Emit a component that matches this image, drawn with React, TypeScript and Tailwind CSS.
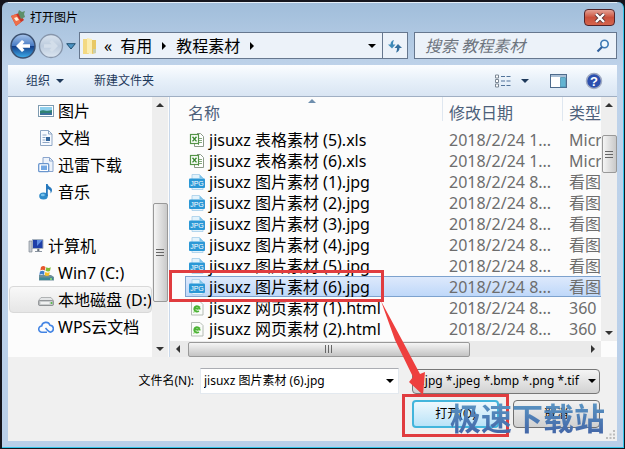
import type { ReactNode } from 'react'

const files = [
  { name: 'jisuxz 表格素材 (5).xls', kind: 'xls', date: '2018/2/24 1...', type: 'Microsoft' },
  { name: 'jisuxz 表格素材 (6).xls', kind: 'xls', date: '2018/2/24 1...', type: 'Microsoft' },
  { name: 'jisuxz 图片素材 (1).jpg', kind: 'jpg', date: '2018/2/24 8...', type: '看图王' },
  { name: 'jisuxz 图片素材 (2).jpg', kind: 'jpg', date: '2018/2/24 8...', type: '看图王' },
  { name: 'jisuxz 图片素材 (3).jpg', kind: 'jpg', date: '2018/2/24 8...', type: '看图王' },
  { name: 'jisuxz 图片素材 (4).jpg', kind: 'jpg', date: '2018/2/24 8...', type: '看图王' },
  { name: 'jisuxz 图片素材 (5).jpg', kind: 'jpg', date: '2018/2/24 8...', type: '看图王' },
  { name: 'jisuxz 图片素材 (6).jpg', kind: 'jpg', date: '2018/2/24 8...', type: '看图王', selected: true },
  { name: 'jisuxz 网页素材 (1).html', kind: 'html', date: '2018/2/24 8...', type: '360' },
  { name: 'jisuxz 网页素材 (2).html', kind: 'html', date: '2018/2/24 8...', type: '360' },
]

function Triangle({ dir, className = '' }: { dir: 'up' | 'down' | 'left' | 'right'; className?: string }) {
  const shapes = { down: 'M0 2h8L4 6z', up: 'M0 6h8L4 2z', right: 'M2 0v8l4-4z', left: 'M6 0v8L2 4z' }
  return (
    <svg viewBox="0 0 8 8" className={`h-2 w-2 shrink-0 fill-current ${className}`} aria-hidden="true">
      <path d={shapes[dir]} />
    </svg>
  )
}

function Icon({ children }: { children: ReactNode }) {
  return (
    <svg viewBox="0 0 16 16" className="h-4 w-4 shrink-0" aria-hidden="true">
      {children}
    </svg>
  )
}

function FileIcon({ kind }: { kind: string }) {
  if (kind === 'xls') {
    return (
      <Icon>
        <path d="M8 1.500h3.500l3 3v10H5.500V12" fill="#fff" stroke="#8b9a88" />
        <path d="M9.500 4v9M10 6.500h3M10 8.500h3M10 10.500h3" fill="none" stroke="#84a87c" />
        <rect x="1.500" y="2.500" width="8" height="9" fill="#fff" stroke="#559448" strokeWidth="1.200" />
        <path d="M3.500 4.800l4 4.600M7.500 4.800l-4 4.600" stroke="#3a8a30" strokeWidth="1.400" />
      </Icon>
    )
  }
  if (kind === 'jpg') {
    return (
      <Icon>
        <path d="M3 0.500h7.500l3.500 3.500v11.500H3z" fill="#e3f3fc" stroke="#a5cde8" strokeWidth=".8" />
        <path d="M10.500 0.500v3.500H14z" fill="#7cc3ea" />
        <rect x="0" y="4.500" width="16" height="9.500" rx="1" fill="#2b98d6" />
        <text x="8" y="12" textAnchor="middle" fontFamily="Liberation Sans" fontSize="7" fill="#fff">JPG</text>
      </Icon>
    )
  }
  return (
    <Icon>
      <path d="M2.500 1.500h8.500l3 3v10.500H2.500z" fill="#fafcfa" stroke="#b4bcb4" />
      <path d="M5.200 8.500h5.400a2.700 2.700 0 1 0-.8 2.300" fill="none" stroke="#4ab234" strokeWidth="1.800" />
      <path d="M4 12c1 .8 5-2 7-6" fill="none" stroke="#6cc44d" strokeWidth=".8" />
    </Icon>
  )
}

const places = [
  {
    label: '图片',
    icon: (
      <Icon>
        <rect x=".5" y="2.500" width="15" height="11" fill="#fff" stroke="#7e9bb0" />
        <path d="M2 4h12v8H2z" fill="#8fd0ee" />
        <path d="M2 8c3-2 6 1 12-1v5H2z" fill="#2f8273" />
        <path d="M2 10.500c4-1 8 0 12-1V12H2z" fill="#3c6f9c" />
      </Icon>
    ),
  },
  {
    label: '文档',
    icon: (
      <Icon>
        <path d="M2.500 .5h8l3.500 3.500v11.500H2.500z" fill="#f7faff" stroke="#8ea6c4" />
        <path d="M10.500 .5V4H14M4.500 5h4M4.500 7.500h3M4.500 10h3M4.500 12.500h7" fill="none" stroke="#8ea6c4" />
        <rect x="8" y="7" width="4" height="4" fill="#34669c" />
      </Icon>
    ),
  },
  {
    label: '迅雷下载',
    icon: (
      <Icon>
        <path d="M5 .5h6.500L15 4v10.500H5z" fill="#edf3fb" stroke="#8aa5cd" />
        <path d="M11.500 .5V4H15" fill="none" stroke="#8aa5cd" />
        <rect x=".7" y="6.700" width="10" height="8" rx="1" fill="#fff" stroke="#6a96ce" strokeWidth="1.300" />
        <rect x="3" y="8.500" width="6" height="4.500" fill="#73a7e2" />
      </Icon>
    ),
  },
  {
    label: '音乐',
    icon: (
      <Icon>
        <ellipse cx="5.500" cy="12" rx="4.300" ry="3.500" fill="#2f8bca" />
        <ellipse cx="4.800" cy="11" rx="2" ry="1.200" fill="#79c4ee" />
        <path d="M8 12V0h1.700c.3 3 4.300 3 4.300 6 0 1.500-.6 2.500-1.500 3.500.5-3-.8-3.500-2.700-4.500V12z" fill="#2678bd" />
      </Icon>
    ),
  },
]

const drives = [
  {
    label: 'Win7 (C:)',
    icon: (
      <Icon>
        <path d="M1 10h12l3 2v3.500H1z" fill="#6f8e99" />
        <path d="M1.500 12.500h13.500V15H1.500z" fill="#3b8796" />
        <path d="M3 2c2-1.500 3-1 4.500 0L6.800 5.500c-2-1-3-.8-4.500 0z" fill="#e5572c" />
        <path d="M8.300 2.300c2 1 3 .8 4.500 0L12 6c-2 .8-3 .6-4.500-.3z" fill="#7dbb38" />
        <path d="M2 6.500c2-1 3-.8 4.500 0L6 10c-2-1-3-.8-4.700 0z" fill="#3d7fcc" />
        <path d="M7.300 7c2 1 3 .8 4.500 0l-.7 3.500c-2 .8-3 .5-4.500-.3z" fill="#f6bf28" />
        <circle cx="13" cy="14" r="1" fill="#9be36b" />
      </Icon>
    ),
  },
  {
    label: '本地磁盘 (D:)',
    selected: true,
    icon: (
      <Icon>
        <path d="M3 5.500h10l2.500 3v4.500H.5V8.500z" fill="#e3e5e6" stroke="#a1a4a6" strokeWidth=".8" />
        <rect x=".8" y="8.500" width="14.400" height="5" rx="1" fill="#c9cccd" stroke="#808486" strokeWidth=".8" />
        <rect x="2.500" y="10" width="9" height="2" fill="#f0f1f1" />
        <circle cx="13.500" cy="11" r=".9" fill="#4fbf3f" />
      </Icon>
    ),
  },
  {
    label: 'WPS云文档',
    icon: (
      <Icon>
        <path
          d="M9 13.200H4a3.100 3.100 0 0 1-.3-6.200A4.300 4.300 0 0 1 12 6.200a3.500 3.500 0 0 1 1 6.800c-1.500.4-2.500-.5-3.500-1.700L7.500 9"
          fill="none"
          stroke="#4485e4"
          strokeWidth="1.600"
        />
      </Icon>
    ),
  },
]

function Place({ label, icon, selected }: { label: string; icon: ReactNode; selected?: boolean }) {
  return (
    <li>
      <a
        href="#"
        className={`ml-px flex h-[27px] items-center gap-1 overflow-hidden pl-7 text-base leading-6 whitespace-nowrap text-black ${
          selected ? 'rounded-sm border border-[#d9d9d9] bg-linear-to-b from-[#f8f8f8] to-[#e6e6e6]' : 'border border-transparent'
        }`}
      >
        {icon}
        <span>{label}</span>
      </a>
    </li>
  )
}

function Grip({ vertical = false }: { vertical?: boolean }) {
  return (
    <span className={`flex gap-0.5 ${vertical ? 'flex-col' : ''}`}>
      {[0, 1, 2].map((i) => (
        <span key={i} className={`bg-[#666] ${vertical ? 'h-px w-2' : 'h-2 w-px'}`} />
      ))}
    </span>
  )
}

export default function App() {
  return (
    <div className="relative w-full bg-[#15151d] pt-0.5 pr-px pb-px pl-0.5 font-['Noto_Sans','Noto_Sans_CJK_SC',sans-serif] text-xs text-black">
      <div className="rounded-t-md border-r border-b border-[#35c5ea] bg-linear-to-b from-[#a0bdda] via-[#bfd3ea] via-15% to-[#b9cfe9] pr-1.5 pb-1.5 pl-1.5">
        {/* Title bar */}
        <header className="flex h-[30px] items-center gap-1 border-t border-[#e4eef8] pr-0.5 pl-0.5">
          <svg viewBox="0 0 16 16" className="h-4 w-4" aria-hidden="true">
            <path d="M1 6l8-3 5 7-8 6z" fill="#c93526" />
            <path d="M1 6l5-2 5 8-5 4z" fill="#ee6f4a" />
            <path d="M8 3l1-3 3 2 3-1-1 3 1 3-4 2z" fill="#5d8f6a" />
            <path d="M4 8l3-1 2 3-3 1z" fill="#fff0d8" />
          </svg>
          <h1 className="text-xs">打开图片</h1>
          <button
            aria-label="关闭"
            className="ml-auto flex h-[17px] w-[31px] items-center justify-center rounded-sm border border-[#52242a] bg-linear-to-b from-[#e3a094] via-[#c9503c] to-[#d5654e]"
          >
            <svg viewBox="0 0 12 10" className="h-2.5 w-3" aria-hidden="true">
              <path d="M2 1l8 8M10 1L2 9" stroke="#5b3436" strokeWidth="4" />
              <path d="M2 1l8 8M10 1L2 9" stroke="#fff" strokeWidth="2.400" />
            </svg>
          </button>
        </header>

        {/* Address bar */}
        <nav className="flex h-[33px] items-start">
          <div className="flex h-7 items-center rounded-full">
            <button aria-label="后退">
              <svg viewBox="0 0 28 28" className="h-7 w-7" aria-hidden="true">
                <defs>
                  <linearGradient id="back" x1="0" y1="0" x2="0" y2="1">
                    <stop offset="0" stopColor="#a9c6ec" />
                    <stop offset=".48" stopColor="#4a7cc4" />
                    <stop offset=".5" stopColor="#123a86" />
                    <stop offset="1" stopColor="#3fb0ee" />
                  </linearGradient>
                </defs>
                <circle cx="15" cy="14" r="12" fill="url(#back)" stroke="#3c506f" strokeWidth="1.500" />
                <path d="M8 14l6-6 2.500 2-2 2.200H22v3.600h-7.500l2 2.200L14 20z" fill="#fff" />
              </svg>
            </button>
            <button aria-label="前进">
              <svg viewBox="0 0 28 28" className="h-7 w-7" aria-hidden="true">
                <defs>
                  <linearGradient id="fwd" x1="0" y1="0" x2="0" y2="1">
                    <stop offset="0" stopColor="#dbe5f0" />
                    <stop offset=".5" stopColor="#bccbdd" />
                    <stop offset="1" stopColor="#dce6f1" />
                  </linearGradient>
                </defs>
                <circle cx="15" cy="14" r="11.500" fill="url(#fwd)" stroke="#8796ab" strokeWidth="1.300" />
                <path d="M22 14l-6-6-2.500 2 2 2.200H8v3.600h7.500l-2 2.200L16 20z" fill="#d3deea" />
              </svg>
            </button>
            <button aria-label="历史记录" className="px-0.5">
              <svg viewBox="0 0 10 7" className="h-[7px] w-2.5" aria-hidden="true">
                <path d="M.7 .7h8.600L5 6z" fill="#4b94c4" stroke="#22506f" />
              </svg>
            </button>
          </div>
          <div className="ml-px flex h-[27px] grow items-center border border-[#66778e] bg-[#ecf2f9] pl-0.5 text-base leading-6">
            <svg viewBox="0 0 16 18" className="h-[18px] w-4" aria-hidden="true">
              <path d="M1 2h6v15H1z" fill="#f3d983" />
              <path d="M5 1l5 1v15l-5-1z" fill="#fbedb2" />
              <path d="M10 3h4v13l-4 1z" fill="#e8c865" />
              <path d="M11 12h3v4h-3z" fill="#c9cfb0" />
            </svg>
            <span className="ml-1.5">«</span>
            <a href="#" className="ml-2">有用</a>
            <Triangle dir="right" className="mx-2" />
            <a href="#">教程素材</a>
            <Triangle dir="right" className="ml-2" />
            <button aria-label="以前的位置" className="ml-auto px-1.5">
              <Triangle dir="down" />
            </button>
            <button aria-label="刷新" className="flex h-full w-[25px] items-center justify-center border-l border-[#66778e]">
              <svg viewBox="0 0 16 16" className="h-4 w-4" aria-hidden="true">
                <path d="M7 2C5 2.500 3.500 4 3.500 6.500H1l4 4 3.500-4H6c0-2 .3-3 1-4.500z" fill="#3e8ab8" />
                <path d="M9 14.500c2-.5 3.500-2 3.500-4.500H15l-4-4-3.500 4H10c0 2-.3 3-1 4.500z" fill="#346f9e" />
              </svg>
            </button>
          </div>
          <label className="ml-1.5 flex h-[27px] w-1/3 max-w-[203px] items-center border border-[#66778e] bg-[#ecf2f9] pr-1.5 pl-2.5">
            <input
              aria-label="搜索"
              placeholder="搜索 教程素材"
              className="w-full min-w-0 bg-transparent text-base leading-6 italic outline-none placeholder:text-[#6d747d]"
            />
            <svg viewBox="0 0 14 14" className="h-3.5 w-3.5 shrink-0" aria-hidden="true">
              <circle cx="8.500" cy="5" r="3.700" fill="#eef7fd" stroke="#3d79b4" strokeWidth="1.600" />
              <path d="M6 8L1.500 12.500" stroke="#2f5f9b" strokeWidth="2.200" />
            </svg>
          </label>
        </nav>

        {/* Toolbar */}
        <div className="flex h-8 items-center border-b border-[#a0afc3] bg-linear-to-b from-[#fbfdff] via-[#e7f0f9] to-[#d9e5f3] px-[18px] text-[#1e395b]">
          <button className="flex items-center gap-1.5">
            组织
            <Triangle dir="down" />
          </button>
          <button className="ml-[30px]">新建文件夹</button>
          <div className="ml-auto flex items-center">
            <button aria-label="更改视图" className="flex items-center gap-2.5">
              <svg viewBox="0 0 16 14" className="h-3.5 w-4" aria-hidden="true">
                <path d="M.5 1h3v3h-3zM.5 5.500h3v3h-3zM.5 10h3v3h-3z" fill="#fff" stroke="#7b8794" />
                <path d="M6 2.500h4M11.500 2.500h4M6 7h4M11.500 7h4M6 11.500h4M11.500 11.500h4" stroke="#51739a" />
              </svg>
              <Triangle dir="down" />
            </button>
            <button aria-label="显示预览窗格" className="ml-[21px]">
              <svg viewBox="0 0 17 14" className="h-3.5 w-[17px]" aria-hidden="true">
                <rect x=".5" y=".5" width="16" height="13" fill="#fff" stroke="#4e6b8c" />
                <path d="M1 1h15v2H1z" fill="#a9bfd6" />
                <path d="M10.500 3.500h5v9.500h-5z" fill="#63b4d2" stroke="#3d88aa" strokeWidth=".7" />
              </svg>
            </button>
            <button aria-label="获取帮助" className="-mr-1 ml-[18px]">
              <svg viewBox="0 0 18 18" className="h-[18px] w-[18px]" aria-hidden="true">
                <circle cx="9" cy="9" r="7.500" fill="#2c4fae" stroke="#a0abc2" strokeWidth="1.500" />
                <text x="9" y="13.500" textAnchor="middle" fontFamily="Liberation Sans" fontWeight="bold" fontSize="13" fill="#fff">?</text>
              </svg>
            </button>
          </div>
        </div>

        <div className="flex h-[260px] bg-[#fcfcfc]">
          {/* Places */}
          <aside className="flex shrink-0">
            <div className="w-36">
              <ul>
                {places.map((p) => (
                  <Place key={p.label} {...p} />
                ))}
              </ul>
              <a href="#" className="mt-[27px] flex h-[27px] items-center gap-1 pl-5 text-base leading-6">
                <Icon>
                  <path d="M1 3h3v11H1z" fill="#c4c9cf" stroke="#838b95" strokeWidth=".7" />
                  <path d="M4.500 1.500H15v9H4.500z" fill="#1e3fa8" stroke="#a5b0bd" />
                  <path d="M9 2h5.500L9 8z" fill="#5d8ce2" />
                  <path d="M7 13.500h7M9.500 11h1.500v2H9.500z" stroke="#8b95a1" />
                </Icon>
                计算机
              </a>
              <ul>
                {drives.map((d) => (
                  <Place key={d.label} {...d} />
                ))}
              </ul>
            </div>
            <div className="flex w-4 flex-col items-center bg-[#eee] py-1 text-[#333]">
              <Triangle dir="up" />
              <div className="mt-[94px] flex h-[99px] w-[15px] items-center justify-center rounded-xs border border-[#999] bg-linear-to-r from-[#f5f5f5] to-[#c9c9c9]">
                <Grip vertical />
              </div>
              <Triangle dir="down" className="mt-auto" />
            </div>
            <div className="w-0.5 border-r border-[#c9d8ea]" />
          </aside>

          {/* File list */}
          <main className="flex min-w-0 grow flex-col">
            <div className="flex h-[244px]">
              <div className="relative min-w-0 grow overflow-hidden pl-[15px]">
                <Triangle dir="up" className="absolute top-0 left-[138px] text-[#6f8fae]" />
                <table className="w-full table-fixed border-separate border-spacing-0 text-left text-base leading-5 whitespace-nowrap">
                  <thead className="text-[#4c607a]">
                    <tr className="h-8">
                      <th className="p-0 font-normal">
                        <div className="mb-2 h-6 border-r border-[#dfe7f0] pt-1.5 pl-[3px]">名称</div>
                      </th>
                      <th className="w-[120px] p-0 font-normal">
                        <div className="mb-2 h-6 border-r border-[#dfe7f0] pt-1.5 pl-1.5">修改日期</div>
                      </th>
                      <th className="w-[38px] p-0 font-normal">
                        <div className="mb-2 h-6 overflow-x-clip pt-1.5 pl-1.5">类型</div>
                      </th>
                    </tr>
                  </thead>
                  <tbody>
                    {files.map((f) => {
                      const line = f.selected ? 'border-[#7da2ce]' : 'border-transparent'
                      return (
                        <tr key={f.name} className={`h-[21px] ${f.selected ? 'bg-linear-to-b from-[#dfeafc] to-[#bdd7f9]' : ''}`}>
                          <td className={`border-y border-l p-0 ${line}`}>
                            <span className="flex h-[19px] items-center gap-1 pl-[3px]">
                              <FileIcon kind={f.kind} />
                              {f.name}
                            </span>
                          </td>
                          <td className={`border-y p-0 pl-1.5 text-[#6d6d6d] ${line}`}>
                            <span className="flex h-[19px] items-center">{f.date}</span>
                          </td>
                          <td className={`overflow-hidden border-y p-0 pl-1.5 text-[#6d6d6d] ${line}`}>
                            <span className="flex h-[19px] items-center">{f.type}</span>
                          </td>
                        </tr>
                      )
                    })}
                  </tbody>
                </table>
              </div>
              <div className="flex w-4 shrink-0 flex-col items-center bg-[#eee] py-1 text-[#333]">
                <Triangle dir="up" />
                <div className="mt-[26px] flex h-[38px] w-[15px] items-center justify-center rounded-xs border border-[#999] bg-linear-to-r from-[#f5f5f5] to-[#c9c9c9]">
                  <Grip vertical />
                </div>
                <Triangle dir="down" className="mt-auto" />
              </div>
            </div>
            <div className="mr-4 flex h-4 items-center bg-[#eaeaea] px-1 text-[#333]">
              <Triangle dir="left" />
              <div className="ml-1.5 flex h-[15px] w-2/3 items-center justify-center rounded-xs border border-[#999] bg-linear-to-b from-[#f5f5f5] to-[#c4c4c4]">
                <Grip />
              </div>
              <Triangle dir="right" className="ml-auto" />
            </div>
          </main>
        </div>

        {/* File name and actions */}
        <footer className="relative flex h-[84px] flex-col gap-1.5 bg-[#f0f0f0] pt-[11px] pr-[17px]">
          <div className="flex h-[26px] items-center justify-end">
            <label htmlFor="filename" className="mr-1.5 whitespace-nowrap">文件名(N):</label>
            <div className="flex h-[26px] w-[199px] items-center border border-[#e3e9ef] border-t-[#abadb3] bg-white pr-1 pl-[3px]">
              <input id="filename" defaultValue="jisuxz 图片素材 (6).jpg" className="w-full min-w-0 outline-none" />
              <button aria-label="文件名列表">
                <Triangle dir="down" />
              </button>
            </div>
            <div className="relative ml-[13px] flex h-[25px] w-[188px] items-center">
              <select
                aria-label="文件类型"
                className="h-full w-full appearance-none rounded-sm border border-[#777] bg-linear-to-b from-[#f4f4f4] to-[#d2d2d2] pl-0.5 text-xs"
              >
                <option>*.jpg *.jpeg *.bmp *.png *.tif</option>
              </select>
              <Triangle dir="down" className="pointer-events-none absolute right-1" />
            </div>
          </div>
          <div className="flex justify-end gap-3.5">
            <button className="h-7 w-[87px] rounded-sm border-2 border-[#43b5dc] bg-linear-to-b from-[#eef8fd] to-[#b9e3f8]">打开(O)</button>
            <button className="h-7 w-[87px] rounded-sm border border-[#707070] bg-linear-to-b from-[#f2f2f2] to-[#d0d0d0]">取消</button>
          </div>
          <svg viewBox="0 0 9 9" className="absolute right-0.5 bottom-0.5 h-[9px] w-[9px] fill-[#bdbdbd]" aria-hidden="true">
            <path d="M7 0h2v2H7zM7 3.500h2v2H7zM7 7h2v2H7zM3.500 3.500h2v2h-2zM3.500 7h2v2h-2zM0 7h2v2H0z" />
          </svg>
        </footer>
      </div>

      {/* Step highlights drawn over the dialog */}
      <div className="pointer-events-none absolute top-[270px] left-[169px] h-8 w-[215px] border-3 border-[#e03c3f]" />
      <div className="pointer-events-none absolute right-[116px] bottom-3 h-[43px] w-[107px] border-3 border-[#e03c3f]" />
      <svg viewBox="0 0 50 96" className="pointer-events-none absolute right-[197px] bottom-[53px] h-24 w-[50px]" aria-hidden="true">
        <path d="M3 1L17 40L35 77L31 82L45 95L47 72L42 74L24 40z" fill="#ee3f3e" />
      </svg>
      <div className="pointer-events-none absolute right-5 bottom-3.5 bg-linear-to-b from-[#5d9ac6] to-[#4264a6] bg-clip-text font-['Noto_Sans_CJK_SC',sans-serif] text-[31px] leading-9 font-bold text-transparent">
        极速下载站
      </div>
    </div>
  )
}
